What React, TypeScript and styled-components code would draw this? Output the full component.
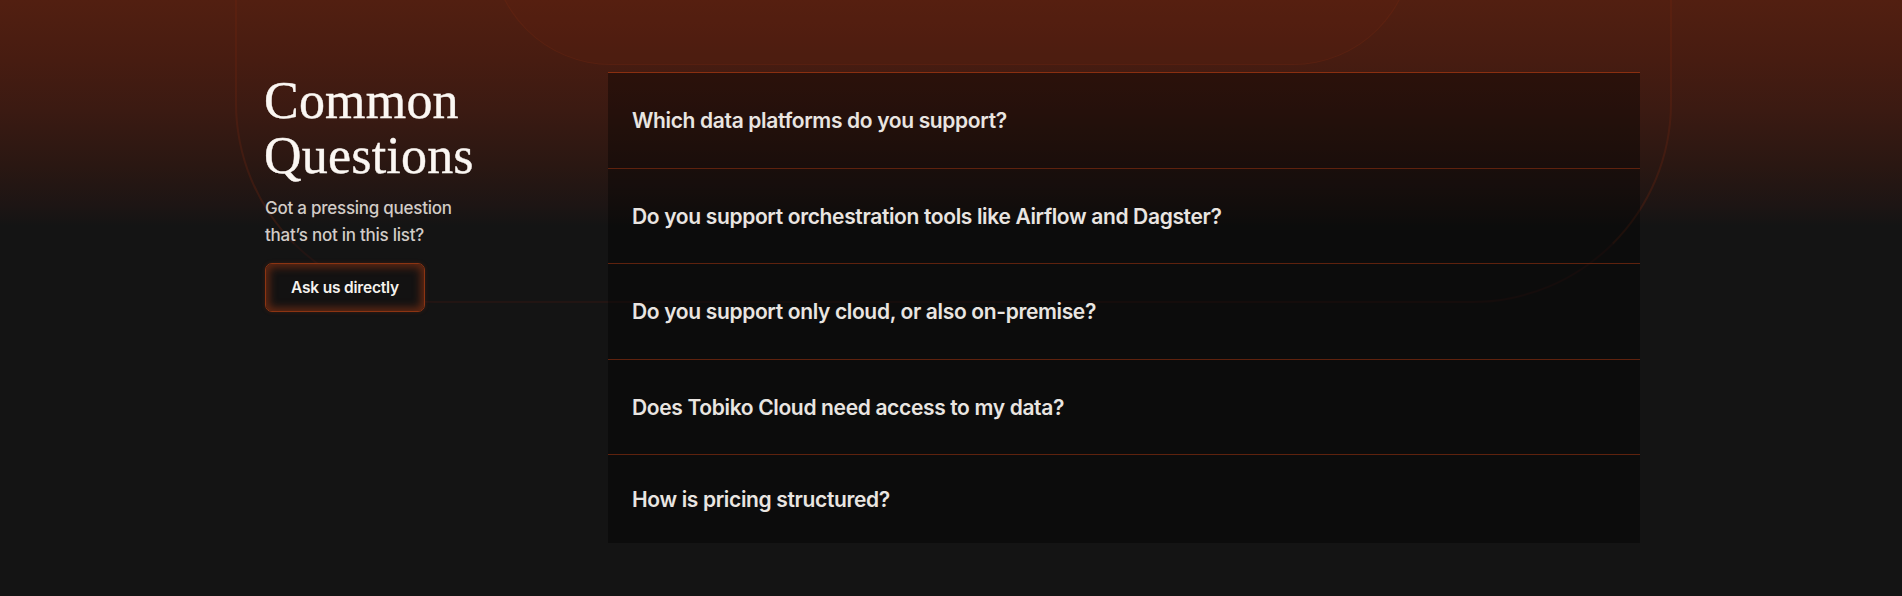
import React from "react";
import styled, { createGlobalStyle } from "styled-components";

const GlobalStyle = createGlobalStyle`
  html, body {
    margin: 0;
    padding: 0;
    background: #141414;
  }
  * { box-sizing: border-box; }
`;

const Page = styled.section`
  position: relative;
  width: 100%;
  min-height: 596px;
  overflow: hidden;
  background: linear-gradient(
    180deg,
    #521f11 0px,
    #471c11 60px,
    #3b1a12 110px,
    #2a1712 165px,
    #1d1514 205px,
    #141414 226px
  );
`;

const Halo = styled.div`
  position: absolute;
  left: 235px;
  width: 1437px;
  top: -200px;
  height: 503px;
  border: 2px solid rgba(110, 38, 18, 0.33);
  border-bottom-color: rgba(90, 30, 16, 0.2);
  border-top: none;
  border-radius: 0 0 200px 200px;
  pointer-events: none;
`;

const Cap = styled.div`
  position: absolute;
  left: 491px;
  width: 922px;
  top: -120px;
  height: 185px;
  background: rgba(110, 36, 14, 0.14);
  border: 1px solid rgba(130, 46, 20, 0.22);
  border-top: none;
  border-radius: 0 0 120px 120px;
  pointer-events: none;
`;

const Container = styled.div`
  position: relative;
  z-index: 1;
  width: 1378px;
  margin: 0 auto;
  padding: 72px 0 53px;
  display: grid;
  grid-template-columns: 346px 1032px;
`;

const Intro = styled.div`
  display: flex;
  flex-direction: column;
  align-items: flex-start;
  padding: 1px 0 0 3px;
`;

const Title = styled.h2`
  margin: 0 0 0 -1px;
  font-family: "Liberation Serif", "Times New Roman", serif;
  font-weight: 400;
  font-size: 52px;
  line-height: 55px;
  color: #fbf7f3;
  letter-spacing: 0.2px;
  -webkit-text-stroke: 0.4px #fbf7f3;
`;

const Lead = styled.p`
  margin: 12px 0 0;
  font-family: Inter, "Noto Sans", sans-serif;
  font-weight: 500;
  font-size: 17px;
  line-height: 27px;
  color: #d2ccc7;
  letter-spacing: -0.25px;
  width: 205px;
`;

const AskButton = styled.button`
  margin-top: 14px;
  width: 160px;
  height: 49px;
  border-radius: 7px;
  border: 1px solid #8c3412;
  background: #131212;
  box-shadow: inset 0 0 9px 3px rgba(170, 60, 20, 0.55),
    0 0 4px rgba(160, 55, 20, 0.25);
  color: #f6f2ee;
  font-family: Inter, "Noto Sans", sans-serif;
  font-weight: 600;
  font-size: 15.5px;
  letter-spacing: -0.2px;
  cursor: pointer;
`;

const List = styled.div`
  display: flex;
  flex-direction: column;
  background: rgba(0, 0, 0, 0.36);
`;

const Row = styled.div<{ $height: number; $first?: boolean }>`
  height: ${(p) => p.$height}px;
  display: flex;
  align-items: center;
  padding: 0 24px;
  border-top: 1px solid ${(p) => (p.$first ? "#8a2f10" : "#5e220e")};
`;

const Question = styled.span`
  font-family: Inter, "Noto Sans", sans-serif;
  font-weight: 600;
  font-size: 21px;
  letter-spacing: -0.35px;
  color: #e9e5e1;
`;

const questions = [
  { q: "Which data platforms do you support?", h: 96 },
  { q: "Do you support orchestration tools like Airflow and Dagster?", h: 95 },
  { q: "Do you support only cloud, or also on-premise?", h: 96 },
  { q: "Does Tobiko Cloud need access to my data?", h: 95 },
  { q: "How is pricing structured?", h: 89 },
];

export default function App() {
  return (
    <>
      <GlobalStyle />
      <Page>
        <Halo />
        <Cap />
        <Container>
          <Intro>
            <Title>
              Common
              <br />
              Questions
            </Title>
            <Lead>Got a pressing question that’s not in this list?</Lead>
            <AskButton>Ask us directly</AskButton>
          </Intro>
          <List>
            {questions.map((item, i) => (
              <Row key={item.q} $height={item.h} $first={i === 0}>
                <Question>{item.q}</Question>
              </Row>
            ))}
          </List>
        </Container>
      </Page>
    </>
  );
}
